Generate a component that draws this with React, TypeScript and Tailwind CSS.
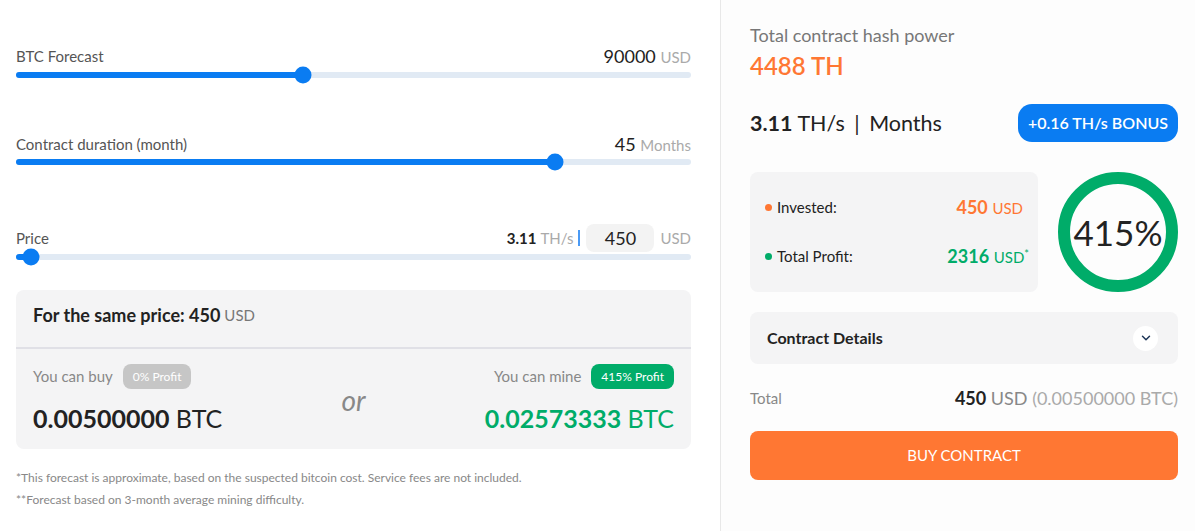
import React from 'react';
import { ChevronDown } from 'lucide-react';

const BLUE = '#0a7cf2';

interface SliderProps {
  percent: number;
}

const Slider: React.FC<SliderProps> = ({ percent }) => (
  <div className="relative h-[6px] w-full rounded-full bg-[#e1eaf4]">
    <div className="absolute left-0 top-0 h-full rounded-full bg-[#0a7cf2]" style={{ width: `${percent}%` }} />
    <div
      className="absolute top-1/2 h-[17px] w-[17px] -translate-x-1/2 -translate-y-1/2 rounded-full bg-[#0a7cf2]"
      style={{ left: `${percent}%` }}
    />
  </div>
);

const App: React.FC = () => {
  return (
    <div className="flex h-[531px] w-full font-['Lato',sans-serif] text-[#222]">
      {/* Calculator */}
      <div className="flex w-[720px] shrink-0 flex-col bg-white pl-4 pr-[29px] pt-[46px]">
        <div className="flex h-5 items-center justify-between">
          <span className="text-[15px] text-[#555]">BTC Forecast</span>
          <span className="text-[18px] leading-5">
            90000 <span className="text-[15px] text-[#aaa]">USD</span>
          </span>
        </div>
        <div className="mt-[6px]">
          <Slider percent={42.5} />
        </div>

        <div className="mt-[56px] flex h-5 items-center justify-between">
          <span className="text-[15px] text-[#555]">Contract duration (month)</span>
          <span className="text-[18px] leading-5">
            45 <span className="text-[15px] text-[#aaa]">Months</span>
          </span>
        </div>
        <div className="mt-[5px]">
          <Slider percent={79.8} />
        </div>

        <div className="mt-[59px] flex h-[28px] items-center justify-between">
          <span className="mt-[1px] text-[15px] text-[#555]">Price</span>
          <div className="flex items-center">
            <span className="text-[15px] font-bold">3.11</span>
            <span className="ml-1 text-[15px] text-[#aaa]">TH/s</span>
            <span className="ml-[5px] h-[16px] w-[2px] bg-[#4a9af5]" />
            <div className="ml-[6px] flex h-[28px] w-[68px] items-center justify-center rounded-lg bg-[#f3f3f3] text-[18px]">
              450
            </div>
            <span className="ml-[6px] text-[15px] text-[#aaa]">USD</span>
          </div>
        </div>
        <div className="mt-[2px]">
          <Slider percent={2.2} />
        </div>

        <div className="mt-[30px] rounded-lg bg-[#f4f4f5]">
          <div className="flex h-[57px] items-center px-[17px] pb-[6px]">
            <span className="text-[18px] font-bold">For the same price: 450</span>
            <span className="ml-1 text-[15px] text-[#777]">USD</span>
          </div>
          <div className="h-[2px] bg-[#e0e0e6]" />
          <div className="grid grid-cols-[1fr_auto_1fr] items-center px-[17px] pb-[15px] pt-[15px]">
            <div className="flex flex-col">
              <div className="flex h-[25px] items-center gap-[10px]">
                <span className="text-[15px] text-[#888]">You can buy</span>
                <span className="flex h-[25px] items-center rounded-lg bg-[#c6c6c6] px-[10px] text-[12px] text-white">
                  0% Profit
                </span>
              </div>
              <div className="mt-[13px] text-[25px] leading-8">
                <span className="font-bold">0.00500000</span> BTC
              </div>
            </div>
            <span className="px-2 pt-[2px] text-[28px] italic text-[#888]">or</span>
            <div className="flex flex-col items-end">
              <div className="flex h-[25px] items-center gap-[10px]">
                <span className="text-[15px] text-[#888]">You can mine</span>
                <span className="flex h-[25px] items-center rounded-lg bg-[#00ac69] px-[10px] text-[12px] text-white">
                  415% Profit
                </span>
              </div>
              <div className="mt-[13px] text-[25px] leading-8 text-[#00ac69]">
                <span className="font-bold">0.02573333</span> BTC
              </div>
            </div>
          </div>
        </div>

        <p className="mt-[21px] text-[12px] leading-4 text-[#888]">
          *This forecast is approximate, based on the suspected bitcoin cost. Service fees are not included.
        </p>
        <p className="mt-[6px] text-[12px] leading-4 text-[#888]">**Forecast based on 3-month average mining difficulty.</p>
      </div>

      {/* Summary */}
      <div className="flex flex-1 flex-col border-l border-[#e8e8e8] bg-[#fdfdfd] pl-[29px] pr-[17px] pt-[24px]">
        <div className="text-[18px] leading-[22px] text-[#777]">Total contract hash power</div>
        <div className="mt-[5px] text-[24px] font-semibold leading-[30px] text-[#ff7733]">4488 TH</div>

        <div className="mt-[23px] flex h-[38px] items-center justify-between">
          <div className="text-[21.5px]">
            <span className="font-bold">3.11</span> TH/s <span className="mx-1">|</span> Months
          </div>
          <div
            className="flex h-[38px] items-center rounded-[14px] px-[10px] text-[16px] font-semibold text-white"
            style={{ backgroundColor: BLUE }}
          >
            +0.16 TH/s BONUS
          </div>
        </div>

        <div className="mt-[30px] flex items-center justify-between">
          <div className="flex h-[120px] w-[288px] flex-col justify-center gap-[22px] rounded-lg bg-[#f4f4f5] px-[15px]">
            <div className="flex items-center justify-between">
              <div className="flex items-center gap-[5px] text-[15px]">
                <span className="h-[7px] w-[7px] rounded-full bg-[#ff7733]" />
                Invested:
              </div>
              <span className="text-[18px] text-[#ff7733]">
                <span className="font-bold">450</span> <span className="text-[15px]">USD</span>
              </span>
            </div>
            <div className="flex items-center justify-between">
              <div className="flex items-center gap-[5px] text-[15px]">
                <span className="h-[7px] w-[7px] rounded-full bg-[#00ac69]" />
                Total Profit:
              </div>
              <span className="mr-[-6px] text-[18px] text-[#00ac69]">
                <span className="font-bold">2316</span> <span className="text-[15px]">USD</span>
                <sup className="text-[11px]">*</sup>
              </span>
            </div>
          </div>
          <div className="relative flex h-[120px] w-[120px] items-center justify-center">
            <svg width="120" height="120" viewBox="0 0 120 120" className="absolute inset-0">
              <circle cx="60" cy="60" r="54" fill="none" stroke="#00ac69" strokeWidth="12" />
            </svg>
            <span className="relative text-[35px] leading-none text-[#222]">415%</span>
          </div>
        </div>

        <div className="mt-[20px] flex h-[52px] items-center justify-between rounded-lg bg-[#f4f4f5] pl-[17px] pr-[20px]">
          <span className="text-[16px] font-bold">Contract Details</span>
          <span className="flex h-[25px] w-[25px] items-center justify-center rounded-full bg-white">
            <ChevronDown size={14} strokeWidth={2.5} className="text-[#1d3557]" />
          </span>
        </div>

        <div className="mt-[22px] flex h-6 items-center justify-between">
          <span className="text-[15px] text-[#888]">Total</span>
          <span className="text-[18px]">
            <span className="font-bold">450</span> <span className="text-[#888]">USD</span>{' '}
            <span className="text-[#aaa]">(0.00500000 BTC)</span>
          </span>
        </div>

        <button className="mt-[21px] flex h-[49px] items-center justify-center rounded-lg bg-[#ff7733] text-[15px] text-white">
          BUY CONTRACT
        </button>
      </div>
    </div>
  );
};

export default App;
